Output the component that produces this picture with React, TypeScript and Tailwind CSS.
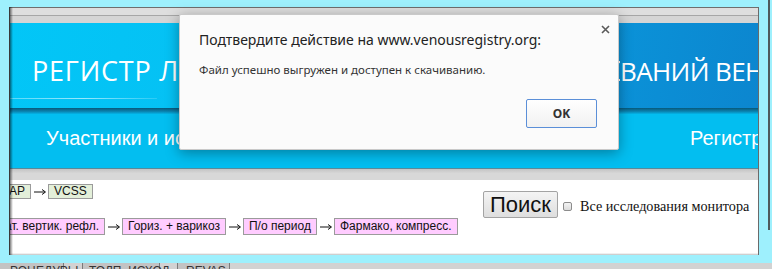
import React from "react";

const Arrow = () => (
  <svg width="12" height="8" viewBox="0 0 12 8" className="ml-[3px] mr-[2px] shrink-0">
    <path d="M0 4H11" stroke="#111" strokeWidth="1" />
    <path d="M8 1.5L11.5 4L8 6.5" stroke="#111" strokeWidth="1" fill="none" />
  </svg>
);

const GreenBox = ({ children }: { children: React.ReactNode }) => (
  <div className="h-[15px] shrink-0 whitespace-nowrap bg-[#e3efd9] border border-[#9b9b9b] px-[5px] text-[12px] leading-[13px] text-[#111]">
    {children}
  </div>
);

const PinkBox = ({ children }: { children: React.ReactNode }) => (
  <div className="h-[17px] shrink-0 whitespace-nowrap bg-[#ffccff] border border-[#9b9b9b] px-[5px] text-[12px] leading-[15px] text-[#111]">
    {children}
  </div>
);

export default function App() {
  return (
    <div
      className="relative w-[772px] h-[269px] overflow-hidden bg-[#9ef0fd] pt-[7px] pl-[9px]"
      style={{ fontFamily: '"Liberation Sans", Arial, sans-serif' }}
    >
      {/* right dark edge line */}
      <div className="absolute left-[768px] top-0 w-[2px] h-[230px] bg-[#4f5a5c]" />

      {/* screenshot window */}
      <div className="relative w-[750px] h-[248px] overflow-hidden bg-white flex flex-col border-l border-[#3a3a3a] border-r border-r-[#6a6a6a]">
        {/* top chrome */}
        <div className="h-[1px] bg-[#6e6e6e] shrink-0" />
        <div className="h-[7px] bg-[#dedede] shrink-0" />
        <div className="h-[1px] bg-[#a6a6a6] shrink-0" />
        <div className="h-[7px] bg-[#d5d5d5] shrink-0" />

        {/* header */}
        <div className="h-[85px] shrink-0 bg-[linear-gradient(100deg,#02c6f7_0%,#06c0f3_30%,#07aee8_55%,#0a95da_75%,#0c86cf_100%)] pt-[34px]">
          <div
            className="flex items-baseline pl-[22px] text-[27px] leading-[27px] text-white whitespace-nowrap"
            style={{ fontFamily: '"Open Sans", sans-serif' }}
          >
            <span className="w-[588px] shrink-0 overflow-hidden tracking-[0.8px]">РЕГИСТР ЛЕЧЕБНО-ДИАГНОСТИЧЕСКИХ ИССЛЕДО</span>
            <span className="text-[26px] tracking-[-0.6px]">ВАНИЙ ВЕН</span>
          </div>
          <div className="mt-[13px] w-[147px] h-[1px] bg-[linear-gradient(90deg,rgba(255,255,255,0.35),rgba(255,255,255,0.6)_50%,rgba(255,255,255,0.15))]" />
        </div>
        <div className="h-[6px] shrink-0 bg-[linear-gradient(180deg,#08587a,#0a86b3_60%,#04b5e8)]" />

        {/* nav */}
        <div className="h-[54px] shrink-0 bg-[#03bef0] pt-[14px] pl-[36px] flex text-[20px] leading-[20px] text-white whitespace-nowrap">
          <span className="w-[644px] shrink-0">Участники и исследования</span>
          <span>Регистр</span>
        </div>
        <div className="h-[1px] shrink-0 bg-[#5a8a9a]" />
        <div className="h-[11px] shrink-0 bg-[linear-gradient(180deg,#c4c4c4,#d8d8d8_40%,#d8d8d8)]" />

        {/* content */}
        <div className="flex-1 flex pt-[4px]">
          <div className="w-[449px] shrink-0 flex flex-col">
            <div className="flex items-center">
              <div className="w-[21px] overflow-hidden flex justify-end shrink-0">
                <GreenBox>CEAP</GreenBox>
              </div>
              <Arrow />
              <GreenBox>VCSS</GreenBox>
            </div>
            <div className="flex items-center mt-[19px]">
              <div className="w-[95px] overflow-hidden flex justify-end shrink-0">
                <PinkBox>Недостат. вертик. рефл.</PinkBox>
              </div>
              <Arrow />
              <PinkBox>Гориз. + варикоз</PinkBox>
              <Arrow />
              <PinkBox>П/о период</PinkBox>
              <Arrow />
              <PinkBox>Фармако, компресс.</PinkBox>
            </div>
          </div>
          <div className="ml-[24px] mt-[7px] flex items-center self-start">
            <button className="w-[75px] h-[27px] rounded-[2px] border border-[#a3a3a3] bg-[linear-gradient(180deg,#f4f4f4,#dedede)] text-[22px] leading-[22px] text-[#111] flex items-center justify-center">
              Поиск
            </button>
            <div className="ml-[5px] mt-[3px] w-[9px] h-[9px] rounded-[2px] border border-[#8c8c8c] bg-[linear-gradient(180deg,#f3f3f3,#dcdcdc)]" />
            <span
              className="ml-[8px] mt-[3px] text-[14.2px] leading-[16px] text-[#111] whitespace-nowrap"
              style={{ fontFamily: '"Liberation Serif", "Times New Roman", serif' }}
            >
              Все исследования монитора
            </span>
          </div>
        </div>

        {/* left shadow overlay */}
        <div className="absolute left-0 top-0 w-[3px] h-full bg-[linear-gradient(90deg,rgba(0,0,0,0.5),rgba(0,0,0,0))]" />
        {/* bottom shadow */}
        <div className="absolute left-0 bottom-0 w-full h-[2px] bg-[linear-gradient(0deg,rgba(0,0,0,0.25),rgba(0,0,0,0))]" />
      </div>

      {/* underlying page strip at bottom */}
      <div className="mt-[8px] -ml-[9px] h-[6px] w-[772px] overflow-hidden flex bg-[#d2d2d2] text-[12px] leading-[12px] text-[#333] whitespace-nowrap">
        <div className="w-[64px] shrink-0 bg-[#c3c3c3] border-r border-[#7a7a7a] pl-[10px] pt-[2px]">РОЦЕДУРЫ</div>
        <div className="w-[18px] shrink-0" />
        <div className="w-[78px] shrink-0 bg-[#c3c3c3] border-l border-r border-[#7a7a7a] pl-[6px] pt-[2px]">ТОЛП. ИСХОД</div>
        <div className="w-[17px] shrink-0" />
        <div className="w-[53px] shrink-0 bg-[#c3c3c3] border-l border-r border-[#7a7a7a] pl-[8px] pt-[2px]">REVAS</div>
      </div>

      {/* confirm dialog */}
      <div
        className="absolute left-[179px] top-[14px] w-[440px] h-[136px] rounded-[2px] border border-[#c9c9c9] bg-[#fbfbfb] shadow-[0_3px_14px_rgba(0,0,0,0.35)] flex flex-col pl-[19px] pr-[21px] pt-[15px]"
        style={{ fontFamily: '"Noto Sans", "Open Sans", sans-serif' }}
      >
        <svg width="9" height="9" viewBox="0 0 9 9" className="absolute left-[421px] top-[10px]">
          <path d="M1 1L8 8M8 1L1 8" stroke="#5a5a5a" strokeWidth="1.6" />
        </svg>
        <div className="text-[14px] leading-[20px] text-[#222] whitespace-nowrap">
          Подтвердите действие на www.venousregistry.org:
        </div>
        <div className="mt-[12px] text-[11.5px] leading-[16px] text-[#333] whitespace-nowrap">
          Файл успешно выгружен и доступен к скачиванию.
        </div>
        <div className="mt-auto mb-[21px] flex justify-end">
          <button className="w-[71px] h-[29px] rounded-[2px] border border-[#5b8fd8] bg-[linear-gradient(180deg,#ffffff,#f1f1f1)] text-[12px] font-bold text-[#333]">
            OK
          </button>
        </div>
      </div>
    </div>
  );
}
